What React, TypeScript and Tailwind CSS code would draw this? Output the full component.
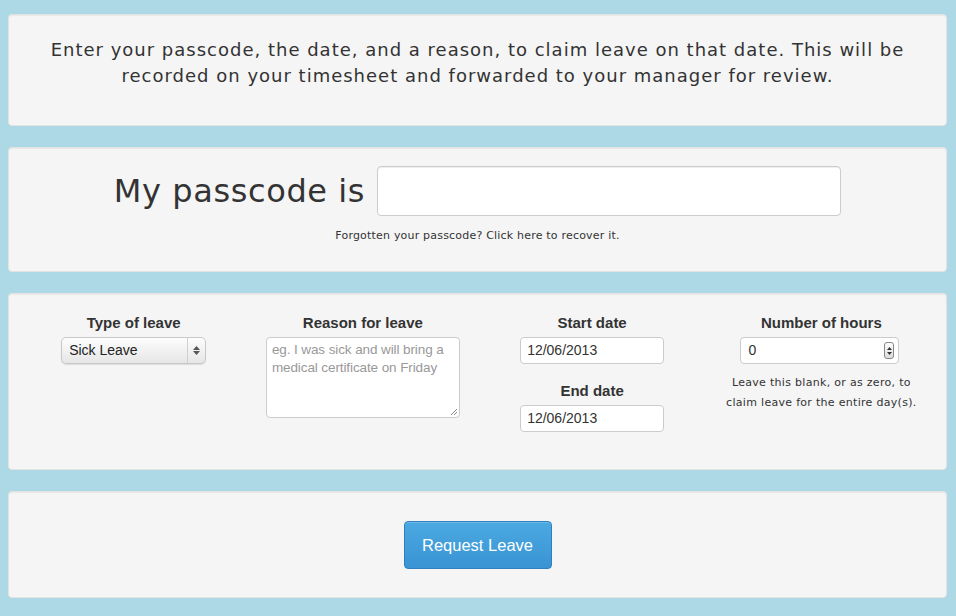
import React from "react";

const verdana = { fontFamily: '"DejaVu Sans", Verdana, sans-serif' };
const helv = { fontFamily: '"Liberation Sans", Arial, sans-serif' };

function Panel({ className = "", children }: { className?: string; children: React.ReactNode }) {
  return (
    <div className={`rounded-[4px] border border-[#e3e3e3] bg-[#f5f5f5] shadow-[inset_0_1px_1px_rgba(0,0,0,0.05)] ${className}`}>
      {children}
    </div>
  );
}

function Label({ children }: { children: React.ReactNode }) {
  return (
    <div className="text-[15px] font-bold leading-[20px] text-[#333]" style={helv}>
      {children}
    </div>
  );
}

export default function App() {
  return (
    <div className="min-h-[616px] w-[956px] bg-[#add8e6] pt-[14px] pl-2 pr-[9px] pb-[18px] flex flex-col gap-[21px] text-[#333]">
      <Panel className="h-[112px] pt-[22px]">
        <p className="text-center text-[18px] leading-[26px] tracking-[1px] text-[#333]" style={verdana}>
          Enter your passcode, the date, and a reason, to claim leave on that date. This will be
          <br />
          recorded on your timesheet and forwarded to your manager for review.
        </p>
      </Panel>

      <Panel className="h-[125px] pt-[18px]">
        <div className="flex items-center justify-center gap-3">
          <span className="text-[32px] leading-[40px] tracking-[0.6px] text-[#333]" style={verdana}>
            My passcode is
          </span>
          <div className="w-[464px] h-[50px] rounded-[4px] border border-[#ccc] bg-white shadow-[inset_0_1px_1px_rgba(0,0,0,0.075)]" />
        </div>
        <div className="mt-[12px] text-center text-[11px] leading-[16px] tracking-[0.2px] text-[#333]" style={verdana}>
          Forgotten your passcode? Click here to recover it.
        </div>
      </Panel>

      <Panel className="h-[177px] pt-[19px] px-[10px]">
        <div className="grid grid-cols-4">
          <div className="flex flex-col items-center">
            <Label>Type of leave</Label>
            <div
              className="mt-[4px] w-[145px] h-[27px] rounded-[5px] border border-[#c8c8c8] bg-gradient-to-b from-[#fdfdfd] to-[#e6e6e6] flex items-center shadow-[0_1px_1px_rgba(0,0,0,0.1)]"
              style={helv}
            >
              <span className="flex-1 pl-[7px] text-[14px] text-[#222]">Sick Leave</span>
              <div className="h-full w-[18px] border-l border-[#d0d0d0] flex flex-col items-center justify-center gap-[1px]">
                <svg width="7" height="4" viewBox="0 0 7 4"><path d="M3.5 0 L7 4 L0 4 Z" fill="#555" /></svg>
                <svg width="7" height="4" viewBox="0 0 7 4"><path d="M0 0 L7 0 L3.5 4 Z" fill="#555" /></svg>
              </div>
            </div>
          </div>

          <div className="flex flex-col items-center">
            <Label>Reason for leave</Label>
            <div className="mt-[4px] w-[194px] h-[81px] rounded-[4px] border border-[#ccc] bg-white pl-[5px] pr-[2px] pt-[3px] relative" style={helv}>
              <div className="text-[13.5px] leading-[18px] tracking-[-0.1px] text-[#999]">
                eg. I was sick and will bring a<br />medical certificate on Friday
              </div>
              <svg className="absolute right-[1px] bottom-[1px]" width="8" height="8" viewBox="0 0 8 8">
                <path d="M7 1 L1 7 M7 4 L4 7" stroke="#888" strokeWidth="1" />
              </svg>
            </div>
          </div>

          <div className="flex flex-col items-center">
            <Label>Start date</Label>
            <div className="mt-[4px] w-[144px] h-[27px] rounded-[4px] border border-[#ccc] bg-white flex items-center pl-[6px] text-[14px] text-[#333]" style={helv}>
              12/06/2013
            </div>
            <div className="mt-[17px]">
              <Label>End date</Label>
            </div>
            <div className="mt-[4px] w-[144px] h-[27px] rounded-[4px] border border-[#ccc] bg-white flex items-center pl-[6px] text-[14px] text-[#333]" style={helv}>
              12/06/2013
            </div>
          </div>

          <div className="flex flex-col items-center">
            <Label>Number of hours</Label>
            <div className="mt-[4px] mr-[3px] w-[159px] h-[27px] rounded-[4px] border border-[#ccc] bg-white flex items-center pl-[7px] pr-[4px] text-[14px] text-[#333]" style={helv}>
              <span className="flex-1">0</span>
              <div className="w-[10px] h-[17px] rounded-[3px] border border-[#888] bg-gradient-to-b from-white to-[#ddd] flex flex-col items-center justify-center gap-[2px]">
                <svg width="5" height="3" viewBox="0 0 5 3"><path d="M2.5 0 L5 3 L0 3 Z" fill="#333" /></svg>
                <svg width="5" height="3" viewBox="0 0 5 3"><path d="M0 0 L5 0 L2.5 3 Z" fill="#333" /></svg>
              </div>
            </div>
            <div className="mt-[9px] text-center text-[11px] leading-[20px] tracking-[0.3px] text-[#333]" style={verdana}>
              Leave this blank, or as zero, to
              <br />
              claim leave for the entire day(s).
            </div>
          </div>
        </div>
      </Panel>

      <Panel className="h-[107px] flex items-center justify-center">
        <button
          className="w-[148px] h-[48px] rounded-[4px] border border-[#2f7fbf] bg-gradient-to-b from-[#4ba9e1] to-[#3a93d4] text-white text-[16.5px] pt-[2px] shadow-[inset_0_1px_0_rgba(255,255,255,0.2)]"
          style={helv}
        >
          Request Leave
        </button>
      </Panel>
    </div>
  );
}
